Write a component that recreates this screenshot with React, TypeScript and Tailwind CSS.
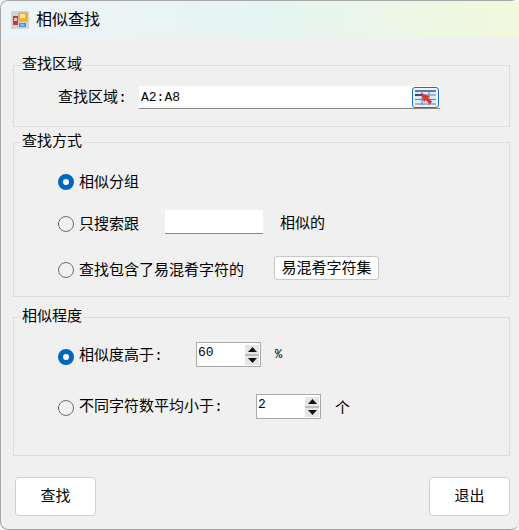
const cjk = "font-['Noto_Sans_CJK_SC','Noto_Sans',sans-serif]";

function Colon() {
  return <span className="font-['Liberation_Mono',monospace]">:</span>;
}

function Radio({ label, checked, colon }: { label: string; checked?: boolean; colon?: boolean }) {
  return (
    <label className="flex items-center gap-[5px]">
      {checked ? (
        <span className="size-4 rounded-full border-[5px] border-[#0067c0] bg-white" />
      ) : (
        <span className="size-4 rounded-full border border-[#6e6e6e] bg-[#f0f0f0]" />
      )}
      <span className="-mt-[3px]">
        {label}
        {colon && <Colon />}
      </span>
    </label>
  );
}

function Spinner({ value }: { value: string }) {
  return (
    <div className="flex h-[25px] w-[65px] items-start justify-between border border-[#a9a9a9] bg-white pr-[1px] pl-[1px] pt-[1px]">
      <span className="font-['Liberation_Mono',monospace] text-[13px] leading-[17px]">{value}</span>
      <div className="mt-[1px] flex w-[14px] flex-col gap-[2px] bg-[#bdbdbd]">
        <div className="flex h-[9px] items-center justify-center bg-[#e6e6e6]">
          <svg width="9" height="5" viewBox="0 0 9 5"><path d="M4.5 0 9 5H0z" fill="#111" /></svg>
        </div>
        <div className="flex h-[9px] items-center justify-center bg-[#e6e6e6]">
          <svg width="9" height="5" viewBox="0 0 9 5"><path d="M0 0h9L4.5 5z" fill="#111" /></svg>
        </div>
      </div>
    </div>
  );
}

function Group({ title, className, children }: { title: string; className: string; children: React.ReactNode }) {
  return (
    <fieldset className={`border border-[#dcdcdc] ${className}`}>
      <legend className="ml-[7px] px-[1px] pb-[4px] text-[15px] leading-[16px]">{title}</legend>
      {children}
    </fieldset>
  );
}

function AppIcon() {
  return (
    <svg width="18" height="18" viewBox="0 0 18 18">
      <rect width="18" height="18" rx="1" fill="#d2d2d2" />
      <rect x="2" y="5" width="5" height="9" fill="#c9383a" />
      <rect x="3" y="7" width="3" height="3" fill="#f3bcbc" />
      <rect x="8" y="2" width="8" height="8" fill="#f5b82a" stroke="#c98f14" strokeWidth=".6" />
      <rect x="9" y="3" width="5" height="4" fill="#fbe08a" />
      <rect x="8" y="12" width="7" height="4" fill="#4d8fdc" />
      <rect x="9.5" y="13.5" width="4" height="1.2" fill="#bcd7f5" />
    </svg>
  );
}

function PickerIcon() {
  return (
    <svg width="21" height="15" viewBox="0 0 21 15">
      <rect x="0" y="0" width="21" height="15" fill="#e2eaf6" />
      <path d="M0 1h21" stroke="#3b5c9e" strokeWidth="1.6" />
      <path d="M0 5h21M0 9.5h21M0 14h21M7 0v15M14 0v15" stroke="#5c7fc0" strokeWidth="1" />
      <path d="M0 5h7" stroke="#27324f" strokeWidth="1.6" />
      <path d="M6 3l9 3.4-2.4 1.4 4.6 4-2.4 2.4-4.2-4.2L9 12.4z" fill="#d8382c" />
    </svg>
  );
}

export default function App() {
  return (
    <div className={`${cjk} h-[530px] w-[519px] overflow-hidden bg-[#fafafa] text-[15px] leading-[20px] text-black`}>
      <div className="flex h-[530px] flex-col rounded-[8px] border-t border-b border-l border-[#a6a6a6] bg-[#f0f0f0]">
        <header className="flex h-[37px] shrink-0 items-center gap-[7px] rounded-tl-[8px] bg-gradient-to-r from-[#eff3f8] via-[#e6f5f3] to-[#f1f8dc] pl-[10px]">
          <AppIcon />
          <span className="-mt-[3px] text-[16px] leading-5">相似查找</span>
        </header>

        <main className="flex flex-col pt-[17px] pl-[12px] pr-[9px]">
          <Group title="查找区域" className="h-[72px]">
            <div className="flex items-center pt-[11px] pl-[44px]">
              <span className="w-[81px]">
                查找区域
                <Colon />
              </span>
              <div className="flex h-[23px] w-[301px] items-center justify-between border-b border-[#8a8a8a] bg-white pl-[2px] pr-[1px]">
                <span className="pt-[1px] font-['Liberation_Mono',monospace] text-[13px]">A2:A8</span>
                <button className="flex h-[21px] w-[27px] items-center justify-center rounded-[3px] border border-[#0b78d7] bg-[#f4f4f4]">
                  <PickerIcon />
                </button>
              </div>
            </div>
          </Group>

          <Group title="查找方式" className="mt-[5px] h-[165px]">
            <div className="flex flex-col pl-[44px]">
              <div className="mt-[18px] flex h-6 items-center"><Radio label="相似分组" checked /></div>
              <div className="mt-[16px] flex h-[24px] items-center">
                <div className="mt-[4px] w-[107px]"><Radio label="只搜索跟" /></div>
                <div className="h-[24px] w-[98px] border-b border-[#8a8a8a] bg-white" />
                <span className="ml-[17px]">相似的</span>
              </div>
              <div className="mt-[22px] flex h-[24px] items-center">
                <div className="mt-[4px] w-[216px]"><Radio label="查找包含了易混肴字符的" /></div>
                <button className="h-[24px] w-[105px] rounded-[3px] border border-[#c8c8c8] bg-white pb-[2px]">易混肴字符集</button>
              </div>
            </div>
          </Group>

          <Group title="相似程度" className="mt-[10px] h-[149px]">
            <div className="flex flex-col pl-[44px]">
              <div className="mt-[15px] flex items-center">
                <div className="mt-[5px] w-[138px]"><Radio label="相似度高于" colon checked /></div>
                <Spinner value="60" />
                <span className="ml-[14px] font-['Liberation_Mono',monospace] text-[12px]">%</span>
              </div>
              <div className="mt-[27px] flex items-center">
                <div className="mt-[3px] w-[198px]"><Radio label="不同字符数平均小于" colon /></div>
                <Spinner value="2" />
                <span className="ml-[14px]">个</span>
              </div>
            </div>
          </Group>

          <div className="mt-[21px] flex justify-between pl-[2px]">
            <button className="h-[39px] w-[81px] rounded-[4px] border border-[#d0d0d0] bg-white pb-[3px]">查找</button>
            <button className="h-[39px] w-[81px] rounded-[4px] border border-[#d0d0d0] bg-white pb-[3px]">退出</button>
          </div>
        </main>
      </div>
    </div>
  );
}
